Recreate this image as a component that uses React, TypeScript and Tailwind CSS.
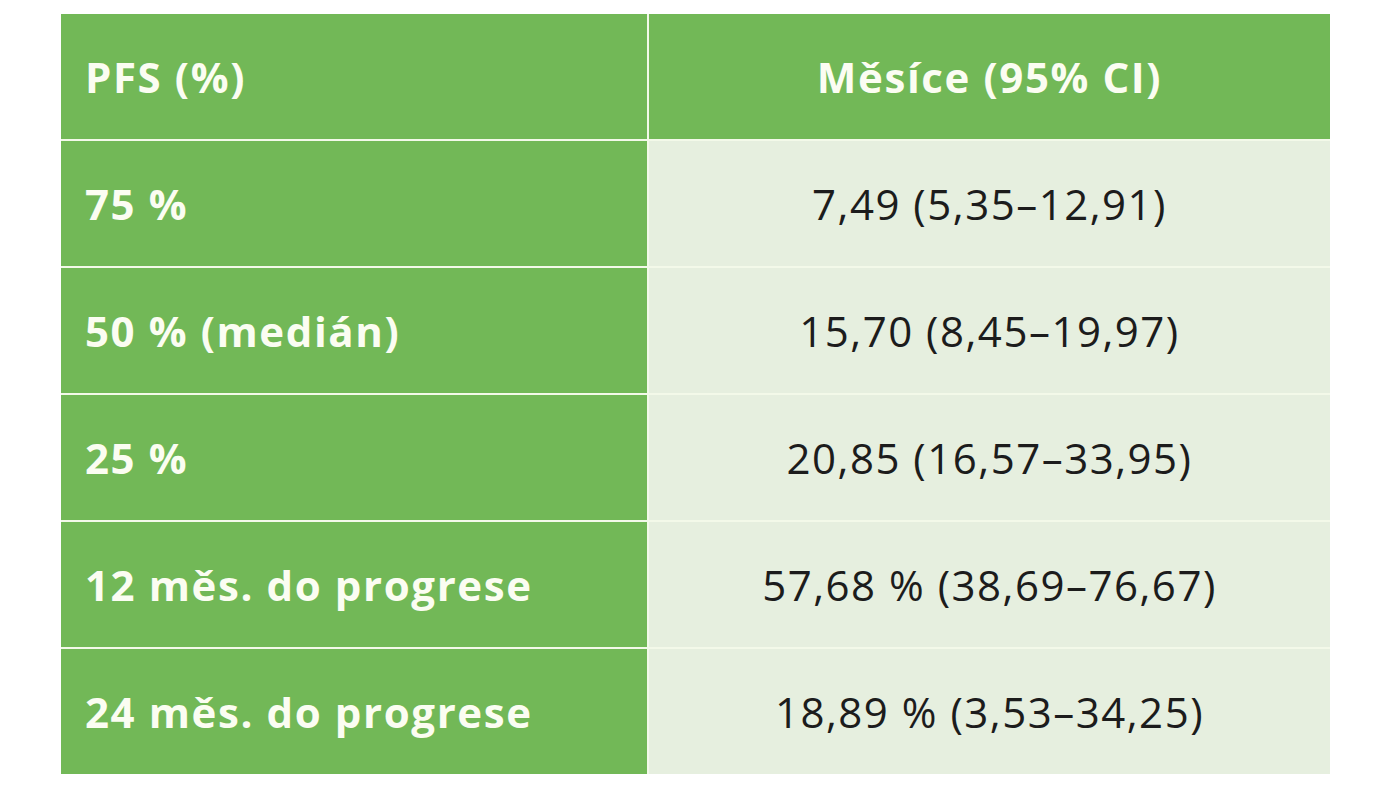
import React from "react";

const rows = [
    { label: "75 %", value: "7,49 (5,35–12,91)" },
    { label: "50 % (medián)", value: "15,70 (8,45–19,97)" },
    { label: "25 %", value: "20,85 (16,57–33,95)" },
    { label: "12 měs. do progrese", value: "57,68 % (38,69–76,67)" },
    { label: "24 měs. do progrese", value: "18,89 % (3,53–34,25)" },
];

export default function App() {
    return (
        <div className="min-h-screen bg-white pt-[14px] pl-[61px] font-['Open_Sans',sans-serif]">
            <div className="grid w-[1269px] grid-cols-[586px_681px] gap-[2px] bg-[#f3f9e9]">
                <div className="flex h-[125px] items-center bg-[#72b857] pl-[24px] text-[42px] font-bold tracking-[1.6px] text-[#fbfdf2]">
                    PFS (%)
                </div>
                <div className="flex h-[125px] items-center justify-center bg-[#72b857] text-[42px] font-bold tracking-[1.6px] text-[#fbfdf2]">
                    Měsíce (95% CI)
                </div>
                {rows.map((r) => (
                    <React.Fragment key={r.label}>
                        <div className="flex h-[125px] items-center bg-[#72b857] pl-[24px] text-[42px] font-bold tracking-[1.6px] text-[#fbfdf2]">
                            {r.label}
                        </div>
                        <div className="flex h-[125px] items-center justify-center bg-[#e6efdf] text-[42px] tracking-[1.5px] text-[#1c1c1c]">
                            {r.value}
                        </div>
                    </React.Fragment>
                ))}
            </div>
        </div>
    );
}
